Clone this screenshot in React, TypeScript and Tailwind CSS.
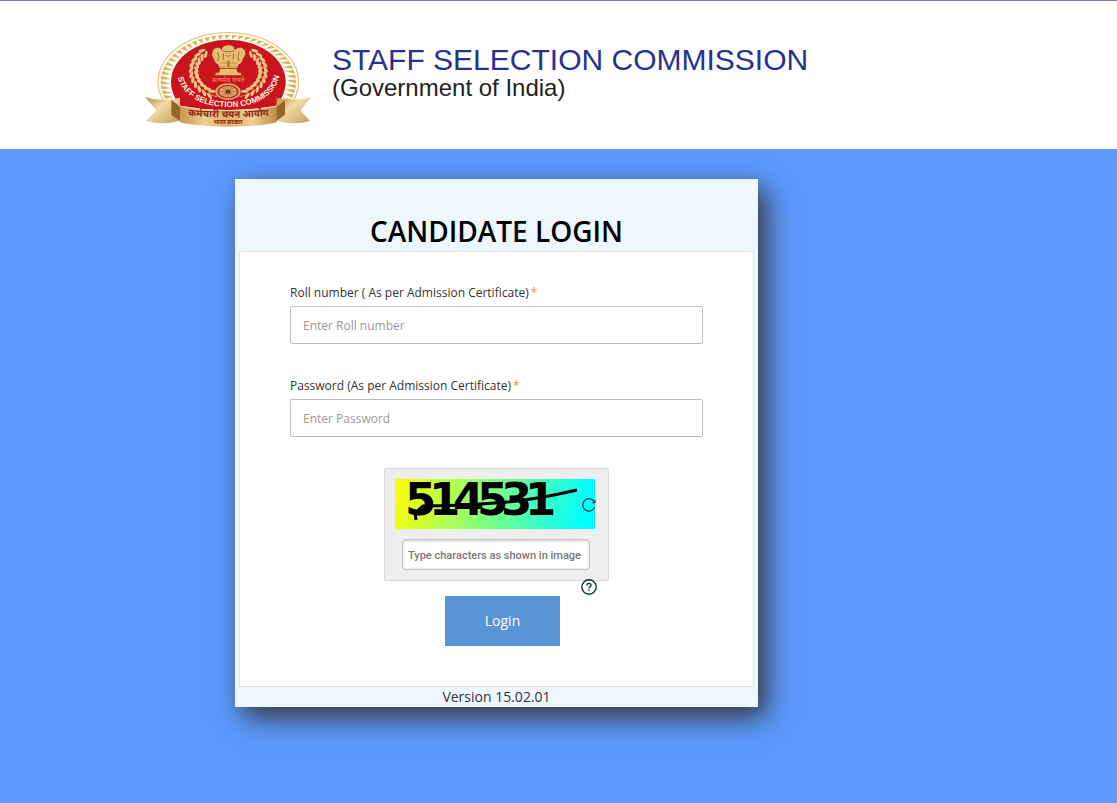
import React from "react";

const GOLD = "#e2bd72";
const CX = 295;
const CY = 186;

const pointOn = (rx: number, ry: number, deg: number, cy = CY) => {
  const a = (deg * Math.PI) / 180;
  return [CX + rx * Math.cos(a), cy + ry * Math.sin(a)];
};

const rays = Array.from({ length: 60 }, (_, i) => {
  const d = i * 6;
  const a = pointOn(174, 129, d - 2.4);
  const b = pointOn(203, 141, d - 2.9);
  const c = pointOn(203, 141, d + 1.8);
  return `M${a.join(" ")}L${b.join(" ")}L${c.join(" ")}Z`;
}).join("");

const laurel = Array.from({ length: 11 }, (_, i) => 118 + i * 10.5);

function Laurel() {
  return (
    <g>
      <path d="M262 230C215 222 184 190 186 148C187 130 200 112 222 103" fill="none" stroke="#d79a52" strokeWidth="3" />
      {laurel.map((deg) => {
        const [x, y] = pointOn(104, 78, deg, 154);
        return (
          <g key={deg} transform={`translate(${x} ${y}) rotate(${deg + 90})`} fill="#e9c588">
            <ellipse cx="0" cy="-9" rx="11" ry="4.5" transform="rotate(28)" />
            <ellipse cx="0" cy="9" rx="11" ry="4.5" transform="rotate(-28)" />
          </g>
        );
      })}
    </g>
  );
}

function Emblem() {
  return (
    <svg viewBox="0 0 600 345" className="h-[115px] w-[200px] shrink-0" role="img" aria-label="Staff Selection Commission emblem">
      <defs>
        <linearGradient id="ribbon" x1="0" x2="1" y1="0" y2="0">
          <stop offset="0" stopColor="#c9964f" />
          <stop offset=".25" stopColor="#edcf94" />
          <stop offset=".5" stopColor="#dcb069" />
          <stop offset=".75" stopColor="#edcf94" />
          <stop offset="1" stopColor="#c08d47" />
        </linearGradient>
        <linearGradient id="tail" x1="0" x2="1" y1="0" y2="1">
          <stop offset="0" stopColor="#b98b46" />
          <stop offset=".4" stopColor="#f1daa6" />
          <stop offset="1" stopColor="#c79a55" />
        </linearGradient>
        <clipPath id="medal">
          <rect x="0" y="0" width="600" height="284" />
        </clipPath>
        <path id="arc" d="M142 160C148 222 208 261 297 261C386 261 442 222 450 156" />
        <path id="ribbonText" d="M158 286Q295 299 432 286" />
      </defs>

      <g clipPath="url(#medal)">
        <ellipse cx={CX} cy={CY - 1} rx="213" ry="149" fill="#dcc68a" />
        <ellipse cx={CX} cy={CY - 1} rx="209" ry="146" fill="#fffbea" />
        <path d={rays} fill="#d3b566" />
        <ellipse cx={CX} cy={CY} rx="172" ry="127" fill="#c9131d" />
      </g>

      <Laurel />
      <g transform={`translate(${CX * 2} 0) scale(-1 1)`}>
        <Laurel />
      </g>

      <g fill={GOLD}>
        <path d="M276 90C276 79 286 76 295 76C304 76 314 79 314 90C326 78 345 84 346 98C347 109 338 112 337 121C336 128 331 131 326 133L321 144H269L264 133C259 131 254 128 253 121C252 112 243 109 247 98C249 84 266 78 276 90Z" />
        <path d="M270 146H320L321 154L326 161H264L269 154ZM258 158H332L335 166H255Z" />
      </g>
      <path d="M277 91C284 97 306 97 313 91M280 100V119M310 100V119M263 96Q270 109 263 123M327 96Q320 109 327 123M287 106Q295 112 303 106" fill="none" stroke="#a96b2b" strokeWidth="3" />
      <path d="M270 129H320M268 141H322" stroke="#b57631" strokeWidth="2" />
      <rect x="291" y="121" width="8" height="20" rx="3" fill="#c8762e" />
      <text x="295" y="187" textAnchor="middle" fontSize="20" fill="#e59b62" fontFamily="'Noto Sans Devanagari', 'Noto Sans', sans-serif">सत्यमेव जयते</text>

      <ellipse cx="294" cy="215" rx="38" ry="25" fill="#dba86a" />
      <ellipse cx="294" cy="215" rx="32" ry="20" fill="#9e2a22" />
      <ellipse cx="294" cy="215" rx="27" ry="17" fill="#dfab70" />
      <path d="M294 198V232M267 215H321M275 203L313 227M313 203L275 227M283 200L305 230M305 200L283 230" stroke="#a94834" strokeWidth="2" />
      <ellipse cx="294" cy="215" rx="8" ry="6" fill="#8e2b1f" />

      <text fontSize="24" fontWeight="700" fill="#fff0d8" fontFamily="'Liberation Sans', sans-serif">
        <textPath href="#arc" startOffset="50%" textAnchor="middle">STAFF SELECTION COMMISSION</textPath>
      </text>

      <path d="M45 231Q92 247 150 233V302Q95 317 47 303L79 271Z" fill="url(#tail)" />
      <path d="M544 231Q490 247 440 233V302Q495 317 540 303L511 271Z" fill="url(#tail)" />
      <path d="M124 240L152 262V304L124 284ZM465 240L438 262V304L465 284Z" fill="#94652d" />
      <path d="M150 257Q295 283 440 257V307Q395 319 295 320Q195 319 150 307Z" fill="url(#ribbon)" />
      <path d="M152 259Q295 285 438 259" fill="none" stroke="#f6dfac" strokeWidth="3" />
      <text fontSize="29" fontWeight="700" fill="#8d2519" fontFamily="'Noto Sans Devanagari', 'Noto Sans', sans-serif">
        <textPath href="#ribbonText" startOffset="50%" textAnchor="middle">कर्मचारी चयन आयोग</textPath>
      </text>
      <text x="294" y="312" textAnchor="middle" fontSize="17" fontWeight="700" fill="#8d2519" fontFamily="'Noto Sans Devanagari', 'Noto Sans', sans-serif">भारत सरकार</text>
    </svg>
  );
}

const captchaDigits = ["5", "1", "4", "5", "3", "1"];

function CaptchaImage() {
  return (
    <svg viewBox="0 0 200 50" className="block h-[50px] w-[200px]" role="img" aria-label="Captcha 514531">
      <defs>
        <linearGradient id="captcha" gradientUnits="userSpaceOnUse" x1="0" y1="0" x2="188" y2="47">
          <stop offset="0" stopColor="#ffff00" />
          <stop offset="1" stopColor="#00ffff" />
        </linearGradient>
      </defs>
      <rect width="200" height="50" fill="url(#captcha)" />
      <g fontFamily="'DejaVu Sans', sans-serif" fontWeight="700" fontSize="45" fill="#000">
        {captchaDigits.map((digit, i) => (
          <text key={i} x={10 + i * 24} y="36">{digit}</text>
        ))}
      </g>
      <path d="M21 41L20 34L28 27Q60 27 100 24Q135 22 182 11" fill="none" stroke="#000" strokeWidth="3" />
    </svg>
  );
}

type FieldProps = { id: string; label: string; placeholder: string; type: string };

function Field({ id, label, placeholder, type }: FieldProps) {
  return (
    <div>
      <label htmlFor={id} className="block text-[12px] leading-5 text-[#333]">
        {label}
        <span className="ml-0.5 text-[#f0883e]">*</span>
      </label>
      <input
        id={id}
        type={type}
        placeholder={placeholder}
        className="mt-[3px] block h-[38px] w-full rounded-xs border border-[#bfbfbf] bg-white px-3 text-[12px] text-[#333] outline-none placeholder:text-[#999]"
      />
    </div>
  );
}

export default function App() {
  return (
    <div className="flex min-h-screen flex-col bg-[#5c9aff] font-['Open_Sans',sans-serif]">
      <header className="flex h-[149px] items-start border-t border-[#8a76a5] bg-white pt-[19px] pl-[130px]">
        <Emblem />
        <div className="pt-6 pl-[2px] font-['Liberation_Sans',Arial,sans-serif] whitespace-nowrap">
          <p className="text-[30px] leading-8 text-[#27318f]">STAFF SELECTION COMMISSION</p>
          <p className="text-[24px] leading-6 text-[#222]">(Government of India)</p>
        </div>
      </header>

      <main className="grid flex-1 grid-cols-[235fr_523fr_359fr] items-start py-[30px]">
        <section className="col-start-2 bg-[#eef7ff] px-1 pt-8 shadow-[8px_10px_26px_0_#333333]">
          <h1 className="text-center text-[28px] leading-10 font-semibold text-black">CANDIDATE LOGIN</h1>

          <form className="border border-[#dde3e6] bg-white px-[50px] pt-[31px] pb-10" onSubmit={(e) => e.preventDefault()}>
            <div className="flex flex-col gap-8">
              <Field id="roll" type="text" label="Roll number ( As per Admission Certificate)" placeholder="Enter Roll number" />
              <Field id="password" type="password" label="Password (As per Admission Certificate)" placeholder="Enter Password" />
            </div>

            <div className="relative mx-auto mt-[31px] h-[113px] w-[225px] rounded-xs border border-[#d8d8d8] bg-[#eeeeee] p-[10px]">
              <CaptchaImage />
              <button type="button" aria-label="Refresh captcha" className="absolute top-7 right-[11px] h-4 w-4">
                <svg viewBox="0 0 16 16" className="h-4 w-4" fill="none" stroke="#12333d" strokeWidth="1.2">
                  <path d="M13.8 10A6.2 6.2 0 1 1 12.8 4" />
                  <path d="M14.6 2.4V6.2H10.8Z" fill="#12333d" stroke="none" />
                </svg>
              </button>
              <input
                type="text"
                aria-label="Captcha characters"
                placeholder="Type characters as shown in image"
                className="mt-[10px] ml-[7px] block h-[31px] w-[188px] rounded-[3px] border border-[#bdc3c7] bg-white px-[5px] pt-0.5 font-[Roboto,Arial,sans-serif] text-[11px] font-medium shadow-[inset_0_1px_3px_#cccccc] outline-none placeholder:text-[#777]"
              />
              <button type="button" aria-label="Captcha help" className="absolute right-[11px] -bottom-[15px] h-4 w-4">
                <svg viewBox="0 0 16 16" className="h-4 w-4" fill="none" stroke="#12333d" strokeWidth="1.4">
                  <circle cx="8" cy="8" r="7.2" />
                  <path d="M6 6.5C6 3.7 10 3.8 10 6.2C10 7.7 8 7.7 8 9.5" />
                  <path d="M8 10.6V12" />
                </svg>
              </button>
            </div>

            <div className="mt-[15px] flex justify-center pl-3">
              <button type="submit" className="h-[50px] w-[115px] bg-[#5894d6] pb-0.5 text-[14px] text-white">Login</button>
            </div>
          </form>

          <p className="text-center text-[14px] leading-5 text-[#333]">Version 15.02.01</p>
        </section>
      </main>
    </div>
  );
}
